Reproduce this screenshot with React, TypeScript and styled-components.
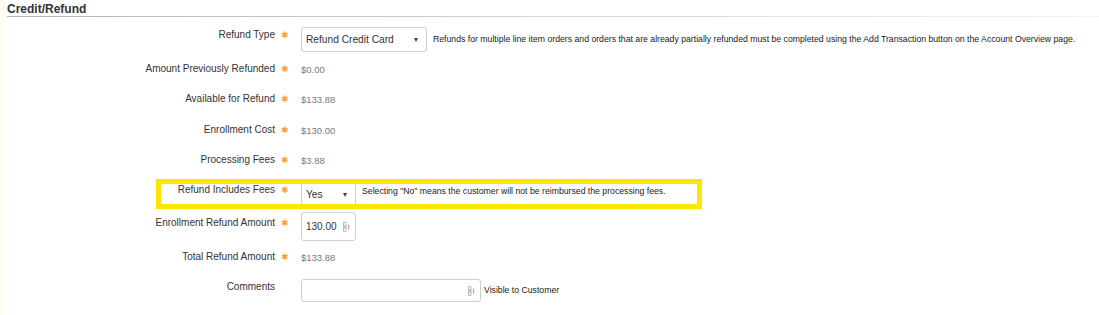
import styled, { createGlobalStyle } from 'styled-components'

const GlobalStyle = createGlobalStyle`
  html, body {
    margin: 0;
    padding: 0;
    background: #ffffff;
  }
  body {
    font-family: 'Liberation Sans', Arial, sans-serif;
    color: #333333;
    border-left: 5px solid #fffcf3;
  }
`

const Section = styled.section`
  width: 1094px;
  height: 315px;
  overflow: hidden;
`

const Header = styled.h2`
  margin: 0 0 0 2px;
  padding: 2px 0 0 0;
  height: 14px;
  font-size: 12px;
  line-height: 14px;
  font-weight: bold;
  color: #333333;
  border-bottom: 1px solid transparent;
  border-image: linear-gradient(to right, #b5b5b5, #d8d8d8 55%, #f4f4f4) 1;
`

const Form = styled.div`
  padding-top: 10px;
  display: flex;
  flex-direction: column;
`

const Row = styled.div<{ $h: number }>`
  position: relative;
  display: flex;
  align-items: flex-start;
  height: ${(p) => p.$h}px;
`

const Label = styled.div<{ $pt?: number }>`
  width: 270px;
  flex: none;
  padding-top: ${(p) => p.$pt ?? 0}px;
  text-align: right;
  font-size: 10px;
  line-height: 14px;
  color: #333333;
`

const Star = styled.span<{ $pt?: number }>`
  width: 26px;
  flex: none;
  padding-top: ${(p) => p.$pt ?? 0}px;
  padding-left: 6px;
  box-sizing: border-box;
  font-size: 9px;
  line-height: 14px;
  color: #f6a03d;
  font-family: 'DejaVu Sans', sans-serif;
`

const Value = styled.div<{ $pt?: number }>`
  padding-top: ${(p) => (p.$pt ?? 0) + 1}px;
  font-size: 9.5px;
  line-height: 14px;
  color: #7a7a7a;
`

const Select = styled.div<{ $w: number; $h: number; $mt?: number }>`
  width: ${(p) => p.$w}px;
  height: ${(p) => p.$h}px;
  margin-top: ${(p) => p.$mt ?? 0}px;
  box-sizing: border-box;
  flex: none;
  display: flex;
  align-items: center;
  justify-content: space-between;
  padding: 0 8px 0 4px;
  border: 1px solid #cfcfcf;
  border-radius: 3px;
  background: #ffffff;
  font-size: 10.2px;
  color: #333333;
`

const Arrow = styled.span`
  width: 0;
  height: 0;
  border-left: 2.5px solid transparent;
  border-right: 2.5px solid transparent;
  border-top: 4px solid #444444;
  margin-top: 1px;
`

const Input = styled.div<{ $w: number; $h: number; $mt?: number }>`
  width: ${(p) => p.$w}px;
  height: ${(p) => p.$h}px;
  margin-top: ${(p) => p.$mt ?? 0}px;
  box-sizing: border-box;
  flex: none;
  display: flex;
  align-items: center;
  justify-content: space-between;
  padding: 0 5px 0 4px;
  border: 1px solid #cfcfcf;
  border-radius: 3px;
  background: #ffffff;
  font-size: 10px;
  color: #333333;
`

const Help = styled.div<{ $pt?: number; $ml?: number }>`
  padding-top: ${(p) => p.$pt ?? 0}px;
  margin-left: ${(p) => p.$ml ?? 6}px;
  font-size: 8.7px;
  line-height: 12px;
  color: #222222;
  white-space: nowrap;
`

const Highlight = styled.div`
  position: absolute;
  left: 151px;
  top: 0;
  width: 546px;
  height: 30px;
  box-sizing: border-box;
  border: 5px solid #ffe600;
  pointer-events: none;
`

function FillIcon() {
  return (
    <svg width="7" height="10" viewBox="0 0 7 10">
      <path d="M0.5 0.5h2.5v9h-2.5z" fill="none" stroke="#b9b9b9" />
      <path d="M1.5 3h1v4h-1z" fill="#9a9a9a" />
      <path d="M5 2.5h1.2v5h-1.2z" fill="#a8a8a8" />
    </svg>
  )
}

function Req({ pt }: { pt?: number }) {
  return <Star $pt={pt}>✱</Star>
}

export default function App() {
  return (
    <>
      <GlobalStyle />
      <Section>
        <Header>Credit/Refund</Header>
        <Form>
          <Row $h={35}>
            <Label $pt={1}>Refund Type</Label>
            <Req pt={1} />
            <Select $w={126} $h={25}>
              Refund Credit Card
              <Arrow />
            </Select>
            <Help $pt={6}>
              Refunds for multiple line item orders and orders that are already partially refunded must be
              completed using the Add Transaction button on the Account Overview page.
            </Help>
          </Row>
          <Row $h={30}>
            <Label>Amount Previously Refunded</Label>
            <Req />
            <Value>$0.00</Value>
          </Row>
          <Row $h={31}>
            <Label>Available for Refund</Label>
            <Req />
            <Value>$133.88</Value>
          </Row>
          <Row $h={30}>
            <Label>Enrollment Cost</Label>
            <Req />
            <Value>$130.00</Value>
          </Row>
          <Row $h={26}>
            <Label>Processing Fees</Label>
            <Req />
            <Value>$3.88</Value>
          </Row>
          <Row $h={33}>
            <Label $pt={4}>Refund Includes Fees</Label>
            <Req pt={4} />
            <Select $w={55} $h={26} $mt={2}>
              Yes
              <Arrow />
            </Select>
            <Help $pt={6}>Selecting "No" means the customer will not be reimbursed the processing fees.</Help>
            <Highlight />
          </Row>
          <Row $h={38}>
            <Label $pt={4}>Enrollment Refund Amount</Label>
            <Req pt={4} />
            <Input $w={55} $h={29}>
              130.00
              <FillIcon />
            </Input>
          </Row>
          <Row $h={29}>
            <Label>Total Refund Amount</Label>
            <Req />
            <Value>$133.88</Value>
          </Row>
          <Row $h={30}>
            <Label $pt={1}>Comments</Label>
            <Star />
            <Input $w={180} $h={23}>
              <span />
              <FillIcon />
            </Input>
            <Help $pt={5} $ml={3}>
              Visible to Customer
            </Help>
          </Row>
        </Form>
      </Section>
    </>
  )
}
